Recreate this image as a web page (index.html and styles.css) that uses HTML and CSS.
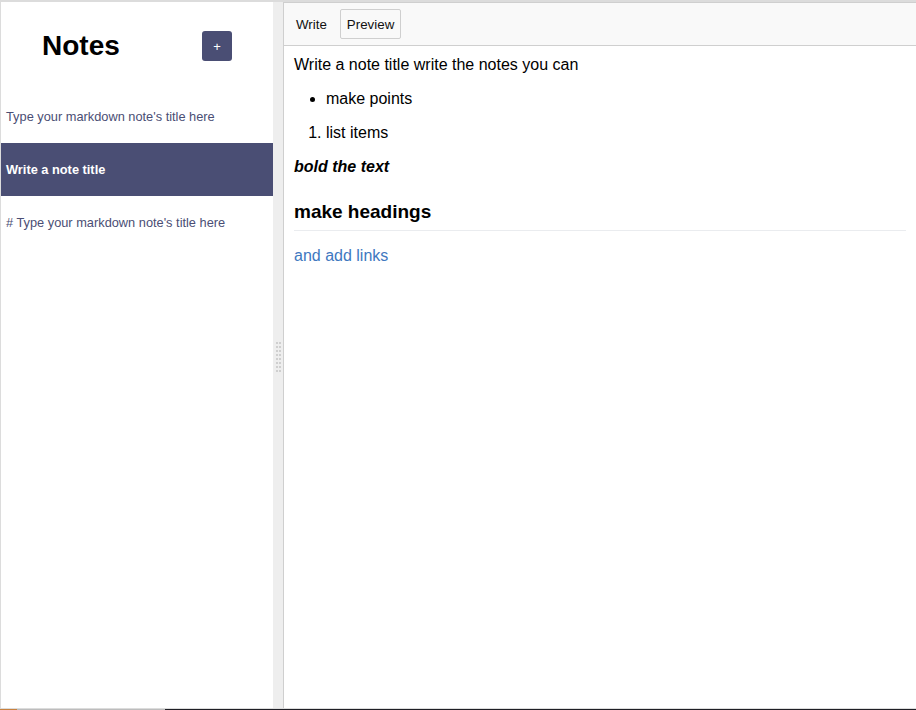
FILE: index.html
```html
<!DOCTYPE html>
<html lang="en">
<head>
<meta charset="utf-8">
<title>Notes</title>
<link rel="stylesheet" href="styles.css">
</head>
<body>
<div class="app">
  <div class="main">
    <section class="sidebar">
      <div class="sidebar-header">
        <h3 class="sidebar-title">Notes</h3>
        <button class="new-note">+</button>
      </div>
      <div class="note-item"><span class="snippet">Type your markdown note's title here</span></div>
      <div class="note-item selected"><span class="snippet">Write a note title</span></div>
      <div class="note-item"><span class="snippet"># Type your markdown note's title here</span></div>
    </section>
    <div class="gutter">
      <svg width="5" height="30" viewBox="0 0 5 30" class="grip">
        <g fill="#cfcfcf">
          <rect x="0" y="0" width="2" height="2"/><rect x="3" y="0" width="2" height="2"/>
          <rect x="0" y="4" width="2" height="2"/><rect x="3" y="4" width="2" height="2"/>
          <rect x="0" y="8" width="2" height="2"/><rect x="3" y="8" width="2" height="2"/>
          <rect x="0" y="12" width="2" height="2"/><rect x="3" y="12" width="2" height="2"/>
          <rect x="0" y="16" width="2" height="2"/><rect x="3" y="16" width="2" height="2"/>
          <rect x="0" y="20" width="2" height="2"/><rect x="3" y="20" width="2" height="2"/>
          <rect x="0" y="24" width="2" height="2"/><rect x="3" y="24" width="2" height="2"/>
          <rect x="0" y="28" width="2" height="2"/><rect x="3" y="28" width="2" height="2"/>
        </g>
      </svg>
    </div>
    <section class="editor">
      <div class="mde-header">
        <button class="tab">Write</button>
        <button class="tab selected">Preview</button>
      </div>
      <div class="preview">
        <p>Write a note title write the notes you can</p>
        <ul><li>make points</li></ul>
        <ol><li>list items</li></ol>
        <p><strong><em>bold the text</em></strong></p>
        <h2>make headings</h2>
        <p><a href="#">and add links</a></p>
      </div>
    </section>
  </div>
  <div class="bottom-strip">
    <span class="seg seg-orange"></span>
    <span class="seg seg-gray"></span>
    <span class="seg seg-dark"></span>
  </div>
</div>
</body>
</html>
```

FILE: styles.css
```css
* { box-sizing: border-box; }

html, body {
  margin: 0;
  padding: 0;
  background: #fff;
  font-family: "Liberation Sans", Arial, sans-serif;
}

.app {
  width: 916px;
  height: 710px;
  display: flex;
  flex-direction: column;
  overflow: hidden;
}

.main {
  flex: 1;
  display: flex;
  flex-direction: row;
  border-top: 2px solid #dcdcdc;
  border-bottom: 1px solid #dcdcdc;
  min-height: 0;
}

.sidebar {
  width: 273px;
  flex: none;
  border-left: 1px solid #dcdcdc;
  display: flex;
  flex-direction: column;
}

.sidebar-header {
  height: 88px;
  display: flex;
  justify-content: space-around;
  align-items: center;
}

.sidebar-title {
  margin: 0;
  font-size: 28px;
  font-weight: 700;
  color: #000;
}

.new-note {
  width: 30px;
  height: 30px;
  border: none;
  border-radius: 3px;
  background: #4a4e74;
  color: #fff;
  font-family: "Liberation Sans", Arial, sans-serif;
  font-size: 13px;
  padding: 0;
}

.note-item {
  height: 53px;
  display: flex;
  align-items: center;
}

.snippet {
  padding-inline: 5px;
  font-size: 12.8px;
  color: #4a4e74;
}

.note-item.selected {
  background: #4a4e74;
}

.note-item.selected .snippet {
  color: #fff;
  font-weight: 700;
}

.gutter {
  width: 10px;
  flex: none;
  background: #eeeeee;
  display: flex;
  align-items: center;
  justify-content: center;
  padding-top: 3px;
}

.grip { display: block; }

.editor {
  flex: 1;
  display: flex;
  flex-direction: column;
  border-left: 1px solid #cfcfcf;
  border-top: 1px solid #cfcfcf;
  min-width: 0;
}

.mde-header {
  height: 43px;
  background: #f9f9f9;
  border-bottom: 1px solid #cfcfcf;
  display: flex;
  align-items: center;
  padding-left: 2px;
}

.tab {
  height: 30px;
  margin: 0 3px;
  padding: 0 6px;
  border: 1px solid transparent;
  border-radius: 2px;
  background: transparent;
  font-family: "Liberation Sans", Arial, sans-serif;
  font-size: 13.33px;
  color: #111;
}

.tab.selected {
  border-color: #cfcfcf;
}

.preview {
  flex: 1;
  padding: 10px;
  font-size: 16px;
  color: #000;
  line-height: 18px;
}

.preview p, .preview ul, .preview ol {
  margin: 0 0 16px 0;
}

.preview ul, .preview ol {
  padding-left: 32px;
}

.preview h2 {
  margin: 24px 0 16px 0;
  font-size: 19px;
  line-height: 24px;
  font-weight: 700;
  padding-bottom: 6px;
  border-bottom: 1px solid #eaecef;
}

.preview a {
  color: #4078c0;
  text-decoration: none;
}

.bottom-strip {
  height: 1px;
  display: flex;
  flex: none;
}

.seg { display: block; height: 1px; }
.seg-orange { width: 17px; background: #c8813f; }
.seg-gray { width: 148px; background: #bdbdbd; }
.seg-dark { flex: 1; background: #1f1f25; }
```
